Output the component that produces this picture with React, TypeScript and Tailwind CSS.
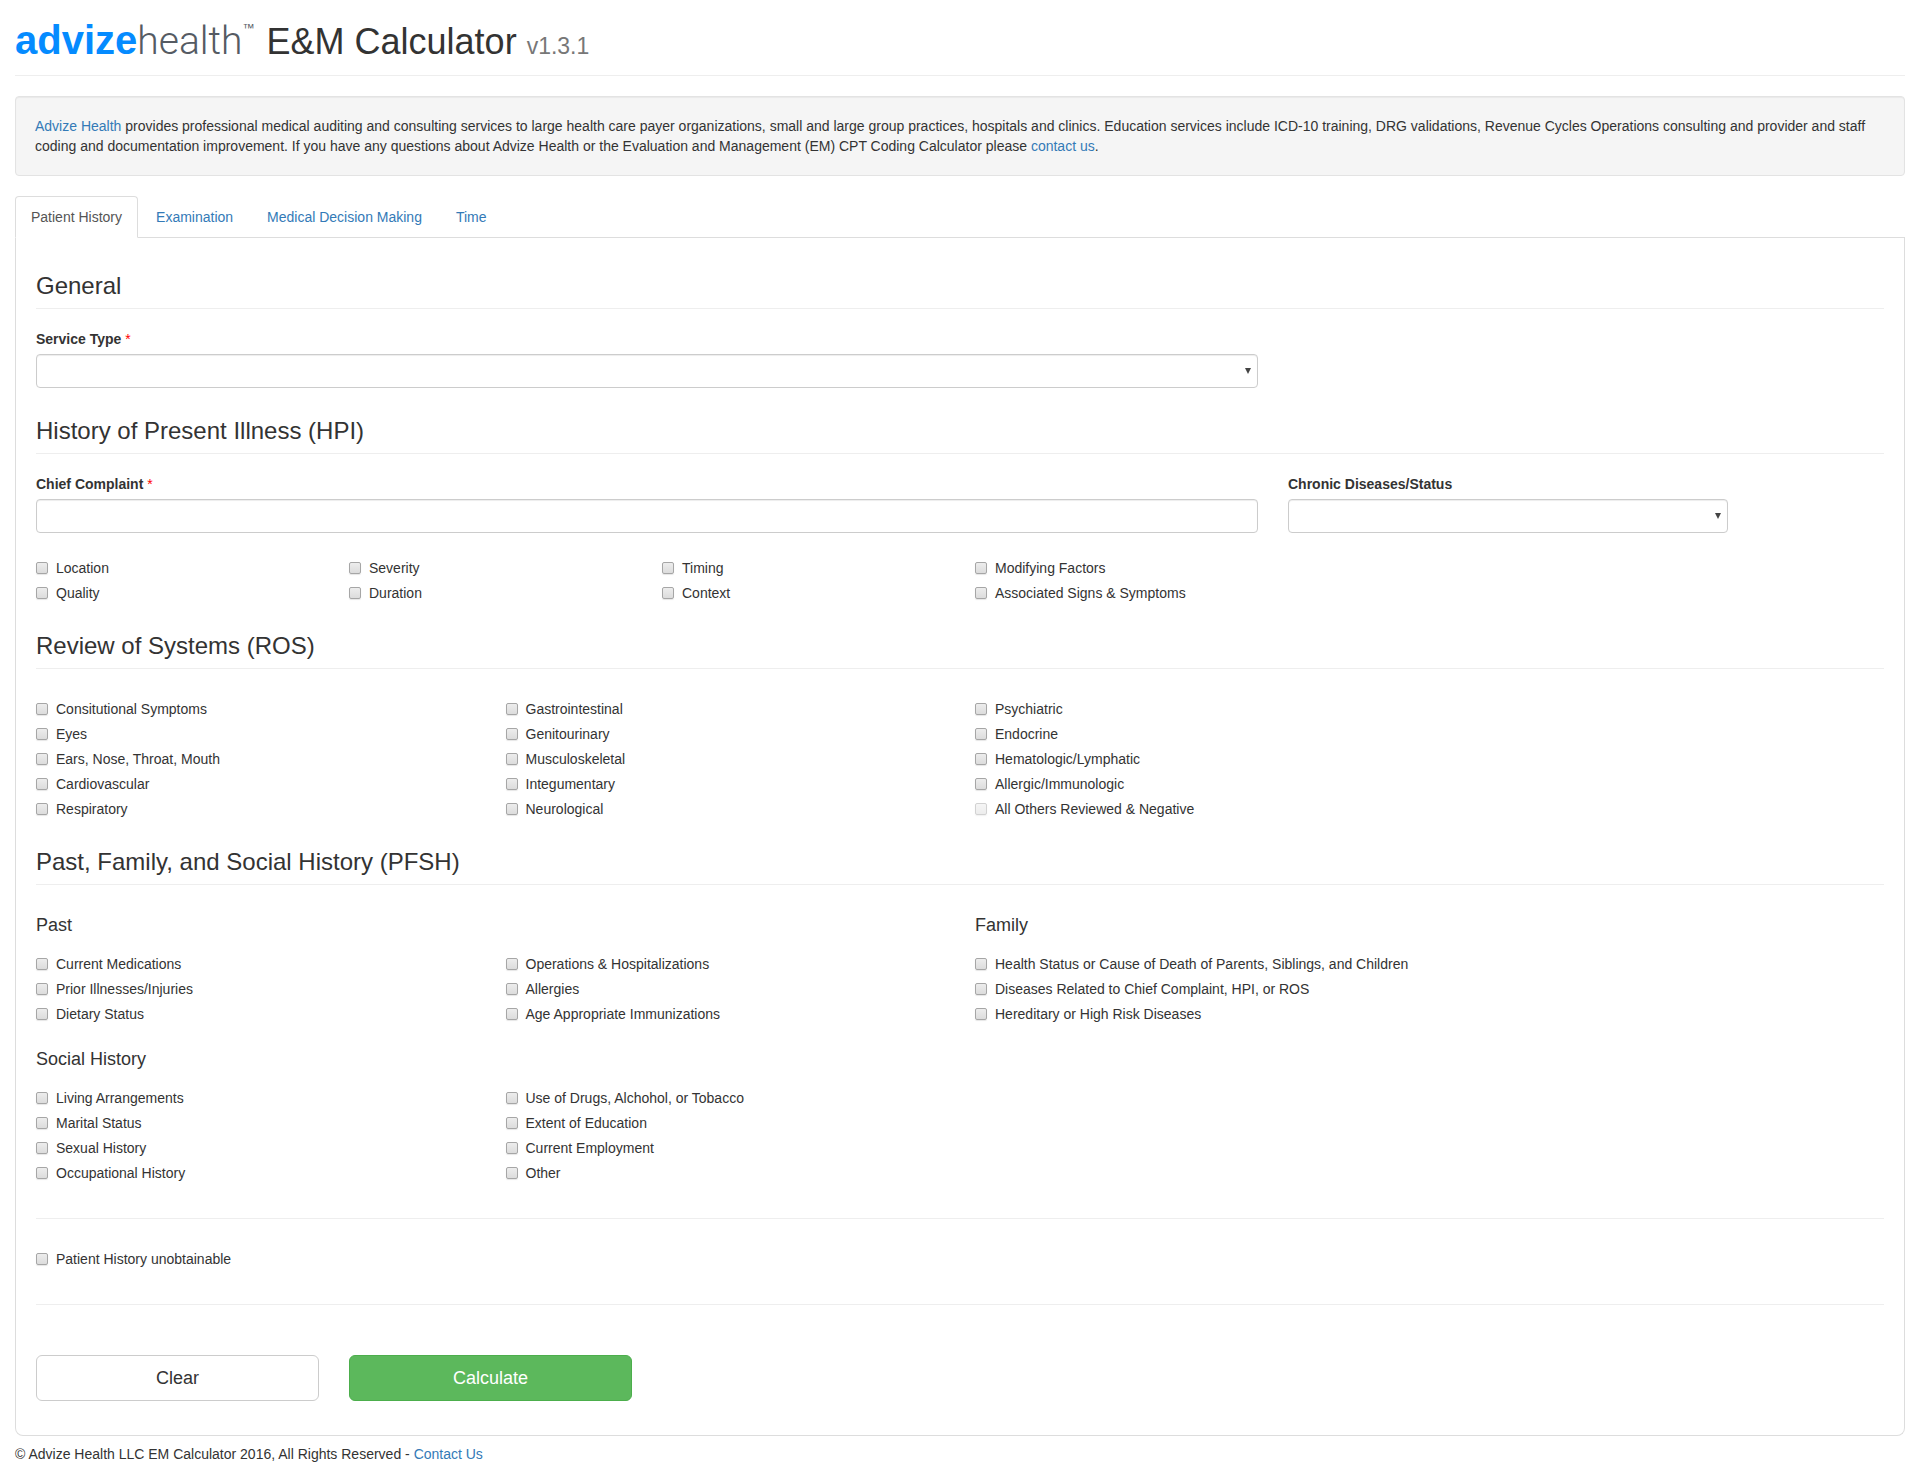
import type { ReactNode } from 'react';

interface CheckItem {
    label: string;
    disabled?: boolean;
}

const TABS = ['Patient History', 'Examination', 'Medical Decision Making', 'Time'];

const HPI_COLUMNS = [
    ['Location', 'Quality'],
    ['Severity', 'Duration'],
    ['Timing', 'Context'],
    ['Modifying Factors', 'Associated Signs & Symptoms'],
];

const ROS_COLUMNS = [
    ['Consitutional Symptoms', 'Eyes', 'Ears, Nose, Throat, Mouth', 'Cardiovascular', 'Respiratory'],
    ['Gastrointestinal', 'Genitourinary', 'Musculoskeletal', 'Integumentary', 'Neurological'],
];

const PAST_COLUMNS = [
    ['Current Medications', 'Prior Illnesses/Injuries', 'Dietary Status'],
    ['Operations & Hospitalizations', 'Allergies', 'Age Appropriate Immunizations'],
];

const FAMILY = [
    'Health Status or Cause of Death of Parents, Siblings, and Children',
    'Diseases Related to Chief Complaint, HPI, or ROS',
    'Hereditary or High Risk Diseases',
];

const SOCIAL_COLUMNS = [
    ['Living Arrangements', 'Marital Status', 'Sexual History', 'Occupational History'],
    ['Use of Drugs, Alchohol, or Tobacco', 'Extent of Education', 'Current Employment', 'Other'],
];

const controlClass =
    'block h-[34px] w-full appearance-none rounded border border-[#ccc] bg-white px-3 shadow-[inset_0_1px_1px_rgba(0,0,0,0.075)]';

function Checkbox({ label, disabled }: CheckItem) {
    return (
        <label className="flex items-center gap-2">
            <input
                type="checkbox"
                disabled={disabled}
                className="size-3 shrink-0 appearance-none rounded-[2px] border border-[#a6a6a6] bg-linear-to-b from-[#ededed] to-[#dcdcdc] shadow-[0_1px_1px_rgba(0,0,0,0.1)] checked:bg-[#337ab7] disabled:opacity-50"
            />
            {label}
        </label>
    );
}

function CheckList({ items, className }: { items: (string | CheckItem)[]; className: string }) {
    return (
        <div className={`flex flex-col gap-[5px] ${className}`}>
            {items.map((item) => {
                const props = typeof item === 'string' ? { label: item } : item;
                return <Checkbox key={props.label} {...props} />;
            })}
        </div>
    );
}

function Row({ children, className = '' }: { children: ReactNode; className?: string }) {
    return <div className={`grid grid-cols-12 gap-x-[30px] ${className}`}>{children}</div>;
}

function SectionTitle({ children }: { children: ReactNode }) {
    return <h3 className="border-b border-[#eee] pb-[9px] text-2xl leading-[26px]">{children}</h3>;
}

function FieldLabel({ htmlFor, children, required }: { htmlFor: string; children: ReactNode; required?: boolean }) {
    return (
        <label htmlFor={htmlFor} className="mb-[5px] block font-bold">
            {children}
            {required && <span className="font-normal text-[#f00]"> *</span>}
        </label>
    );
}

function Select({ id }: { id: string }) {
    return (
        <div className="relative">
            <select id={id} className={controlClass}>
                <option value=""></option>
            </select>
            <svg viewBox="0 0 6 6" className="pointer-events-none absolute top-[14px] right-[7px] size-1.5" fill="#444">
                <path d="M0 0h6L3 6z" />
            </svg>
        </div>
    );
}

export default function App() {
    return (
        <div className="min-h-screen bg-white px-[15px] pt-5 pb-2 font-['Liberation_Sans',Arial,sans-serif] text-sm leading-5 text-[#333]">
            <header className="border-b border-[#eee] pb-[9px]">
                <h1 className="flex items-baseline text-4xl leading-10">
                    <span className="flex items-baseline">
                        <span className="text-[40px] leading-10 font-bold text-[#058bff]">advize</span>
                        <span className="font-[Roboto,sans-serif] text-[39px] leading-10 font-light text-[#555b63]">health</span>
                        <span className="self-start text-xs leading-4 text-[#555b63]">™</span>
                    </span>
                    <span className="ml-3">E&amp;M Calculator</span>
                    <small className="ml-[10px] text-[23px] text-[#777]">v1.3.1</small>
                </h1>
            </header>

            {/* Intro */}
            <div className="mt-5 rounded border border-[#e3e3e3] bg-[#f5f5f5] p-[19px] shadow-[inset_0_1px_1px_rgba(0,0,0,0.05)]">
                <p>
                    <a href="#" className="text-[#337ab7]">
                        Advize Health
                    </a>{' '}
                    provides professional medical auditing and consulting services to large health care payer organizations, small and
                    large group practices, hospitals and clinics. Education services include ICD-10 training, DRG validations, Revenue
                    Cycles Operations consulting and provider and staff coding and documentation improvement. If you have any questions
                    about Advize Health or the Evaluation and Management (EM) CPT Coding Calculator please{' '}
                    <a href="#" className="text-[#337ab7]">
                        contact us
                    </a>
                    .
                </p>
            </div>

            {/* Tabs */}
            <nav className="mt-5 flex gap-0.5 border-b border-[#ddd]">
                {TABS.map((tab, i) => (
                    <a
                        key={tab}
                        href="#"
                        className={
                            i === 0
                                ? '-mb-px rounded-t border border-[#ddd] border-b-white bg-white px-[15px] py-[10px] text-[#555]'
                                : '-mb-px border border-transparent px-[15px] py-[10px] text-[#337ab7]'
                        }
                    >
                        {tab}
                    </a>
                ))}
            </nav>

            <form className="rounded-b-lg border border-t-0 border-[#ddd] px-5 pt-[35px] pb-[34px]">
                {/* General */}
                <section>
                    <SectionTitle>General</SectionTitle>
                    <Row className="mt-5">
                        <div className="col-span-8">
                            <FieldLabel htmlFor="service-type" required>
                                Service Type
                            </FieldLabel>
                            <Select id="service-type" />
                        </div>
                    </Row>
                </section>

                {/* HPI */}
                <section className="mt-[30px]">
                    <SectionTitle>History of Present Illness (HPI)</SectionTitle>
                    <Row className="mt-5">
                        <div className="col-span-8">
                            <FieldLabel htmlFor="chief-complaint" required>
                                Chief Complaint
                            </FieldLabel>
                            <input id="chief-complaint" type="text" className={controlClass} />
                        </div>
                        <div className="col-span-3">
                            <FieldLabel htmlFor="chronic-diseases">Chronic Diseases/Status</FieldLabel>
                            <Select id="chronic-diseases" />
                        </div>
                    </Row>
                    <Row className="mt-[25px]">
                        {HPI_COLUMNS.map((items, i) => (
                            <CheckList key={items[0]} items={items} className={i === 3 ? 'col-span-3' : 'col-span-2'} />
                        ))}
                    </Row>
                </section>

                {/* ROS */}
                <section className="mt-[30px]">
                    <SectionTitle>Review of Systems (ROS)</SectionTitle>
                    <Row className="mt-[30px]">
                        {ROS_COLUMNS.map((items) => (
                            <CheckList key={items[0]} items={items} className="col-span-3" />
                        ))}
                        <CheckList
                            items={[
                                'Psychiatric',
                                'Endocrine',
                                'Hematologic/Lymphatic',
                                'Allergic/Immunologic',
                                { label: 'All Others Reviewed & Negative', disabled: true },
                            ]}
                            className="col-span-6"
                        />
                    </Row>
                </section>

                {/* PFSH */}
                <section className="mt-[30px]">
                    <SectionTitle>Past, Family, and Social History (PFSH)</SectionTitle>
                    <Row className="mt-[30px]">
                        <h4 className="col-span-6 mb-[19px] text-lg leading-5">Past</h4>
                        <h4 className="col-span-6 mb-[19px] text-lg leading-5">Family</h4>
                        {PAST_COLUMNS.map((items) => (
                            <CheckList key={items[0]} items={items} className="col-span-3" />
                        ))}
                        <CheckList items={FAMILY} className="col-span-6" />
                    </Row>
                    <Row className="mt-[25px]">
                        <h4 className="col-span-12 mb-[19px] text-lg leading-5">Social History</h4>
                        {SOCIAL_COLUMNS.map((items) => (
                            <CheckList key={items[0]} items={items} className="col-span-3" />
                        ))}
                    </Row>
                </section>

                <div className="mt-[35px] border-y border-[#eee] pt-[30px] pb-[35px]">
                    <Checkbox label="Patient History unobtainable" />
                </div>

                <Row className="mt-[50px]">
                    <button
                        type="reset"
                        className="col-span-2 h-[46px] rounded-md border border-[#ccc] bg-white text-lg leading-6 text-[#333]"
                    >
                        Clear
                    </button>
                    <button
                        type="button"
                        className="col-span-2 h-[46px] rounded-md border border-[#4cae4c] bg-[#5cb85c] text-lg leading-6 text-white"
                    >
                        Calculate
                    </button>
                </Row>
            </form>

            <footer className="mt-2">
                © Advize Health LLC EM Calculator 2016, All Rights Reserved -{' '}
                <a href="#" className="text-[#337ab7]">
                    Contact Us
                </a>
            </footer>
        </div>
    );
}
